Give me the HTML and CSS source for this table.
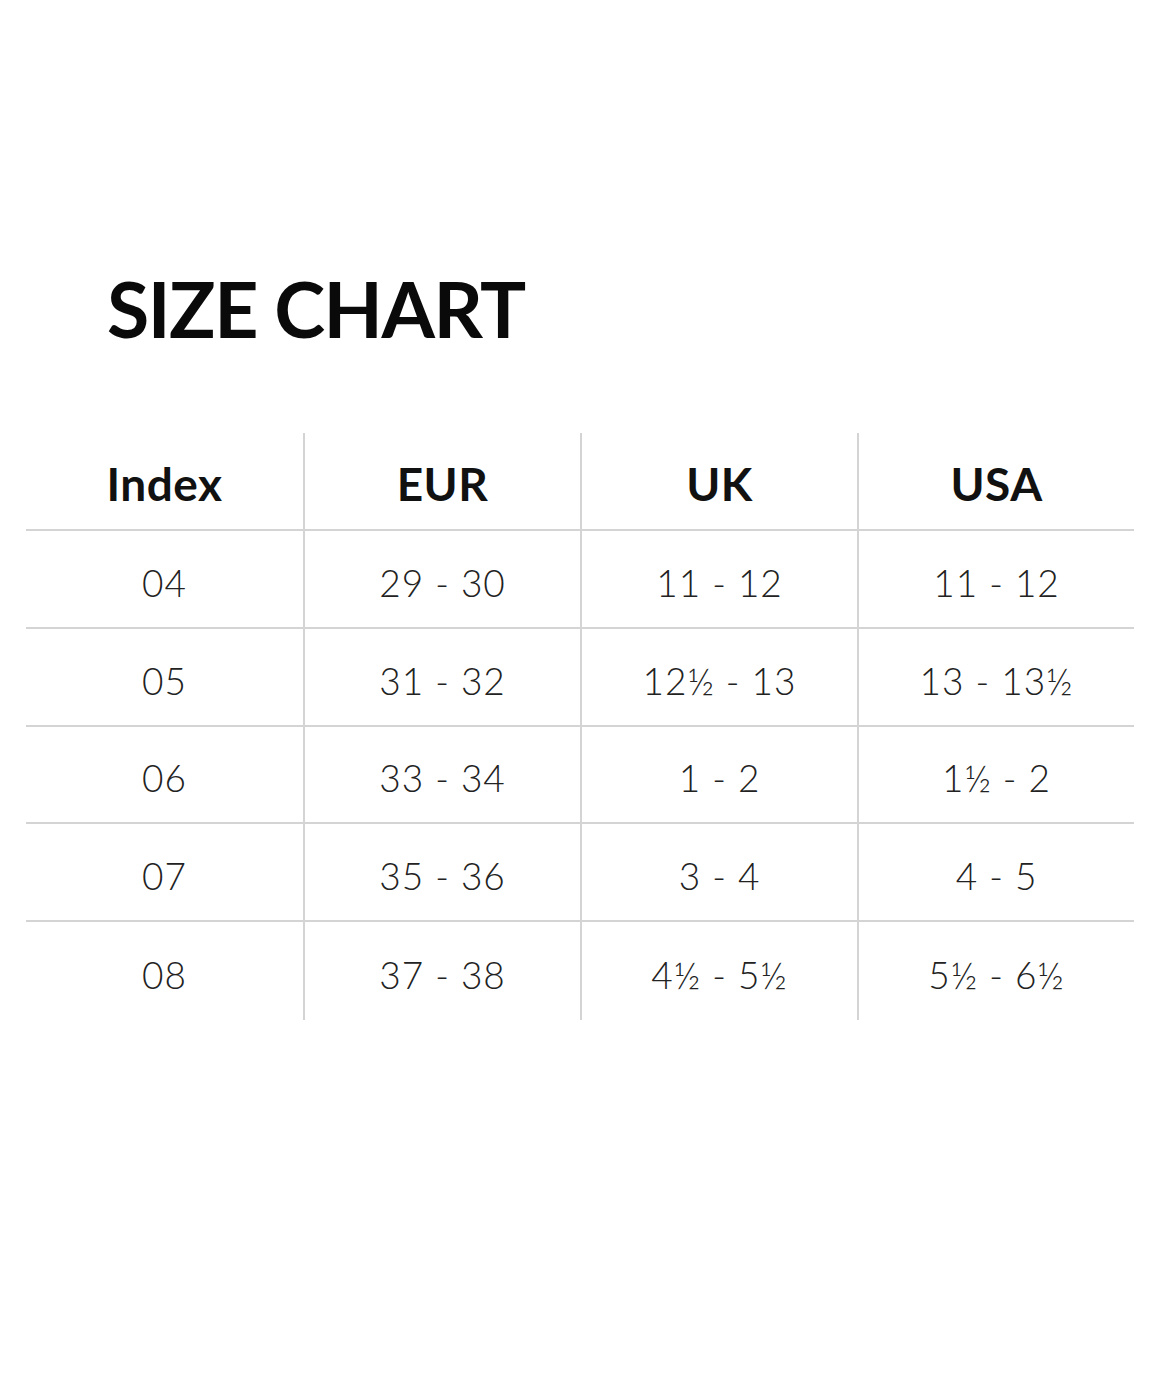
FILE: index.html
```html
<!DOCTYPE html>
<html lang="en">
<head>
<meta charset="utf-8">
<title>Size Chart</title>
<link rel="stylesheet" href="styles.css">
</head>
<body>
<main class="page">
  <h1 class="title">SIZE CHART</h1>
  <div class="chart">
    <div class="cell head">Index</div>
    <div class="cell head">EUR</div>
    <div class="cell head">UK</div>
    <div class="cell head">USA</div>

    <div class="cell">04</div>
    <div class="cell">29 - 30</div>
    <div class="cell">11 - 12</div>
    <div class="cell">11 - 12</div>

    <div class="cell">05</div>
    <div class="cell">31 - 32</div>
    <div class="cell">12½ - 13</div>
    <div class="cell">13 - 13½</div>

    <div class="cell">06</div>
    <div class="cell">33 - 34</div>
    <div class="cell">1 - 2</div>
    <div class="cell">1½ - 2</div>

    <div class="cell">07</div>
    <div class="cell">35 - 36</div>
    <div class="cell">3 - 4</div>
    <div class="cell">4 - 5</div>

    <div class="cell last">08</div>
    <div class="cell last">37 - 38</div>
    <div class="cell last">4½ - 5½</div>
    <div class="cell last">5½ - 6½</div>
  </div>
</main>
</body>
</html>
```
FILE: styles.css
```css
html, body {
  margin: 0;
  padding: 0;
  background: #ffffff;
}

.page {
  width: 1160px;
  height: 1392px;
  font-family: Lato, "Liberation Sans", sans-serif;
  color: #111111;
}

.title {
  margin: 0;
  padding: 270px 0 0 107px;
  font-size: 77px;
  line-height: 1;
  font-weight: 700;
  letter-spacing: -1.5px;
  color: #0a0a0a;
}

.chart {
  margin: 86px 0 0 26px;
  display: grid;
  grid-template-columns: repeat(4, 277px);
  grid-template-rows: 98px 98px 98px 97px 98px 98px;
  width: 1108px;
}

.cell {
  display: flex;
  align-items: center;
  justify-content: center;
  border-bottom: 2px solid #d4d4d4;
  font-size: 37px;
  font-weight: 300;
  letter-spacing: 1px;
  color: #222222;
  padding-top: 6px;
  box-sizing: border-box;
}

.cell:not(:nth-child(4n+1)) {
  border-left: 2px solid #d4d4d4;
}

.cell.head {
  font-size: 46px;
  font-weight: 700;
  letter-spacing: 0.5px;
  color: #111111;
  padding-top: 4px;
}

.cell.last {
  border-bottom: none;
}
```
